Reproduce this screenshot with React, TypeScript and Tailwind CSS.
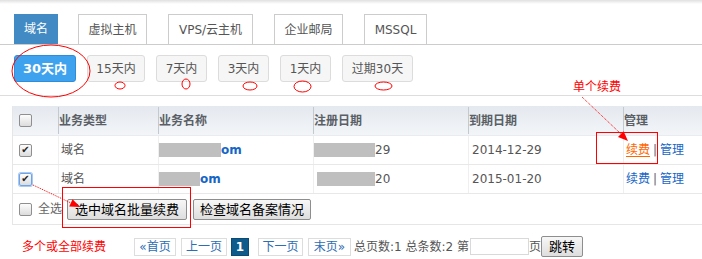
import React from 'react'

const tabs = [
  { label: '域名', w: 'w-[44px]', ml: 'ml-0', active: true },
  { label: '虚拟主机', w: 'w-[69px]', ml: 'ml-[20px]' },
  { label: 'VPS/云主机', w: 'w-[85px]', ml: 'ml-[21px]' },
  { label: '企业邮局', w: 'w-[69px]', ml: 'ml-[21px]' },
  { label: 'MSSQL', w: 'w-[63px]', ml: 'ml-[21px]' },
]

const filters = [
  { label: '30天内', w: 'w-[62px]', active: true },
  { label: '15天内', w: 'w-[58px]' },
  { label: '7天内', w: 'w-[51px]' },
  { label: '3天内', w: 'w-[51px]' },
  { label: '1天内', w: 'w-[51px]' },
  { label: '过期30天', w: 'w-[71px]' },
]

const rows = [
  { boxW: 'w-[62px]', regBox: 'w-[61px] ml-0', reg: '29', exp: '2014-12-29', focus: false, hot: true },
  { boxW: 'w-[41px]', regBox: 'w-[58px] ml-[3px]', reg: '20', exp: '2015-01-20', focus: true, hot: false },
]

function Check({ checked, focus }: { checked?: boolean; focus?: boolean }) {
  return (
    <span
      className={`inline-flex items-center justify-center w-[13px] h-[13px] rounded-[2px] border bg-gradient-to-b from-[#fdfdfd] to-[#dcdcdc] text-[10px] leading-none text-[#222] ${
        focus ? 'border-[#6fa4e6] shadow-[0_0_0_1px_#a9c9f2]' : 'border-[#8f8f8f]'
      }`}
    >
      {checked ? '✔' : ''}
    </span>
  )
}

export default function App() {
  return (
    <div className="relative w-[702px] h-[259px] overflow-hidden bg-white text-[12px] text-[#555] font-['DejaVu_Sans','Noto_Sans_CJK_SC',sans-serif]">
      <div className="h-[4px] bg-gradient-to-b from-[#e0e0e0] to-white" />

      {/* product tabs */}
      <div className="mt-[10px] flex items-end pl-[14px] border-b border-[#cccccc]">
        {tabs.map((t) => (
          <div
            key={t.label}
            className={`${t.w} ${t.ml} h-[30px] flex items-center justify-center ${
              t.active ? 'bg-[#428ac3] text-white' : 'bg-white border border-b-0 border-[#cccccc] text-[#555]'
            }`}
          >
            {t.label}
          </div>
        ))}
      </div>

      {/* expiry filters */}
      <div className="flex gap-[11px] pl-[14px] pt-[10px] pb-[13px] border-b border-[#dddddd]">
        {filters.map((f) => (
          <div
            key={f.label}
            className={`${f.w} h-[27px] flex items-center justify-center rounded-[3px] border ${
              f.active
                ? 'bg-[#3fa2ee] border-[#2d8ddb] text-white font-bold text-[13px]'
                : 'bg-[#f6f6f6] border-[#dcdcdc] text-[#555]'
            }`}
          >
            {f.label}
          </div>
        ))}
      </div>

      {/* table */}
      <div className="mt-[10px] ml-[12px] border-l border-b border-[#e6e6e6]">
        <div className="grid grid-cols-[45px_100px_155px_155px_155px_1fr] h-[30px] bg-gradient-to-b from-[#e4e9ef] to-[#f3f5f8] font-bold text-[#5a5f66] border-b border-[#e8ebef]">
          <div className="flex items-center pl-[6px]">
            <Check />
          </div>
          {['业务类型', '业务名称', '注册日期', '到期日期', '管理'].map((h) => (
            <div key={h} className="flex items-center border-l border-[#c3c9d1] my-[1px]">
              {h}
            </div>
          ))}
        </div>

        {rows.map((r, i) => (
          <div
            key={i}
            className="grid grid-cols-[45px_100px_155px_155px_155px_1fr] h-[29px] border-b border-[#e8e8e8]"
          >
            <div className="flex items-center pl-[6px]">
              <Check checked focus={r.focus} />
            </div>
            <div className="flex items-center pl-[2px] border-l border-[#efefef]">域名</div>
            <div className="flex items-center border-l border-[#efefef] font-bold text-[#1766c6]">
              <span className={`inline-block ${r.boxW} h-[14px] bg-[#bfbfbf]`} />
              <span>om</span>
            </div>
            <div className="flex items-center border-l border-[#efefef]">
              <span className={`inline-block ${r.regBox} h-[14px] bg-[#bfbfbf]`} />
              <span>{r.reg}</span>
            </div>
            <div className="flex items-center pl-[3px] border-l border-[#efefef]">{r.exp}</div>
            <div className="flex items-center pl-[2px] border-l border-[#efefef]">
              <span className={r.hot ? 'text-[#ff6600] underline underline-offset-2' : 'text-[#1766c6]'}>续费</span>
              <span className="mx-[3px] text-[#666]">|</span>
              <span className="text-[#1766c6]">管理</span>
            </div>
          </div>
        ))}

        <div className="flex items-center h-[30px] pl-[6px]">
          <Check />
          <span className="ml-[6px] text-[#666]">全选</span>
          <button className="ml-[5px] w-[120px] h-[21px] rounded-[2px] border border-[#8e8e8e] bg-gradient-to-b from-[#f7f7f7] to-[#dedede] text-[13px] text-black">
            选中域名批量续费
          </button>
          <button className="ml-[6px] w-[118px] h-[21px] rounded-[2px] border border-[#8e8e8e] bg-gradient-to-b from-[#f7f7f7] to-[#dedede] text-[13px] text-black">
            检查域名备案情况
          </button>
        </div>
      </div>

      {/* pagination */}
      <div className="mt-[11px] flex items-center pl-[22px] h-[21px]">
        <span className="w-[112px] text-[#ff0000] text-[12px]">多个或全部续费</span>
        <span className="w-[42px] h-[18px] flex items-center justify-center border border-[#dddddd] text-[#2c6db3]">«首页</span>
        <span className="ml-[5px] w-[46px] h-[18px] flex items-center justify-center border border-[#dddddd] text-[#2c6db3]">上一页</span>
        <span className="ml-[4px] w-[18px] h-[18px] flex items-center justify-center border border-[#0a4a74] bg-[#0d5a8b] text-white font-bold">1</span>
        <span className="ml-[9px] w-[45px] h-[18px] flex items-center justify-center border border-[#dddddd] text-[#2c6db3]">下一页</span>
        <span className="ml-[5px] w-[43px] h-[18px] flex items-center justify-center border border-[#dddddd] text-[#2c6db3]">末页»</span>
        <span className="ml-[3px] text-[#555] whitespace-nowrap">总页数:1 总条数:2 第</span>
        <input className="ml-[1px] w-[59px] h-[17px] border border-[#d9d9d9] bg-white outline-none" />
        <span className="text-[#555]">页</span>
        <button className="w-[42px] h-[21px] rounded-[2px] border border-[#8e8e8e] bg-gradient-to-b from-[#f7f7f7] to-[#dedede] text-[13px] text-black">
          跳转
        </button>
      </div>

      {/* red annotations */}
      <span className="absolute left-[573px] top-[79px] text-[12px] leading-[16px] text-[#ff0000]">单个续费</span>
      <svg className="absolute inset-0 pointer-events-none" width="702" height="259" viewBox="0 0 702 259" fill="none">
        <ellipse cx="51" cy="71" rx="39" ry="26" stroke="#ff0000" />
        <ellipse cx="120" cy="85.5" rx="5" ry="3.5" stroke="#ff0000" />
        <ellipse cx="186" cy="84" rx="4" ry="5" stroke="#ff0000" />
        <ellipse cx="250" cy="86" rx="7" ry="4" stroke="#ff0000" />
        <ellipse cx="302.5" cy="86.5" rx="8.5" ry="5.5" stroke="#ff0000" />
        <ellipse cx="383.5" cy="86" rx="8.5" ry="4" stroke="#ff0000" />
        <rect x="596.5" y="132.5" width="61" height="31" stroke="#ff0000" />
        <rect x="62.5" y="187.5" width="128" height="40" stroke="#ff0000" />
        <line x1="582" y1="97" x2="621" y2="134" stroke="#ff0000" strokeDasharray="1 1" />
        <polygon points="628,141 618,137 623.6,131.2" fill="#ff0000" />
        <line x1="33" y1="185" x2="71" y2="203" stroke="#ff0000" strokeDasharray="1 1" />
        <polygon points="80,207 69.2,206.4 72.6,199.2" fill="#ff0000" />
      </svg>
    </div>
  )
}
